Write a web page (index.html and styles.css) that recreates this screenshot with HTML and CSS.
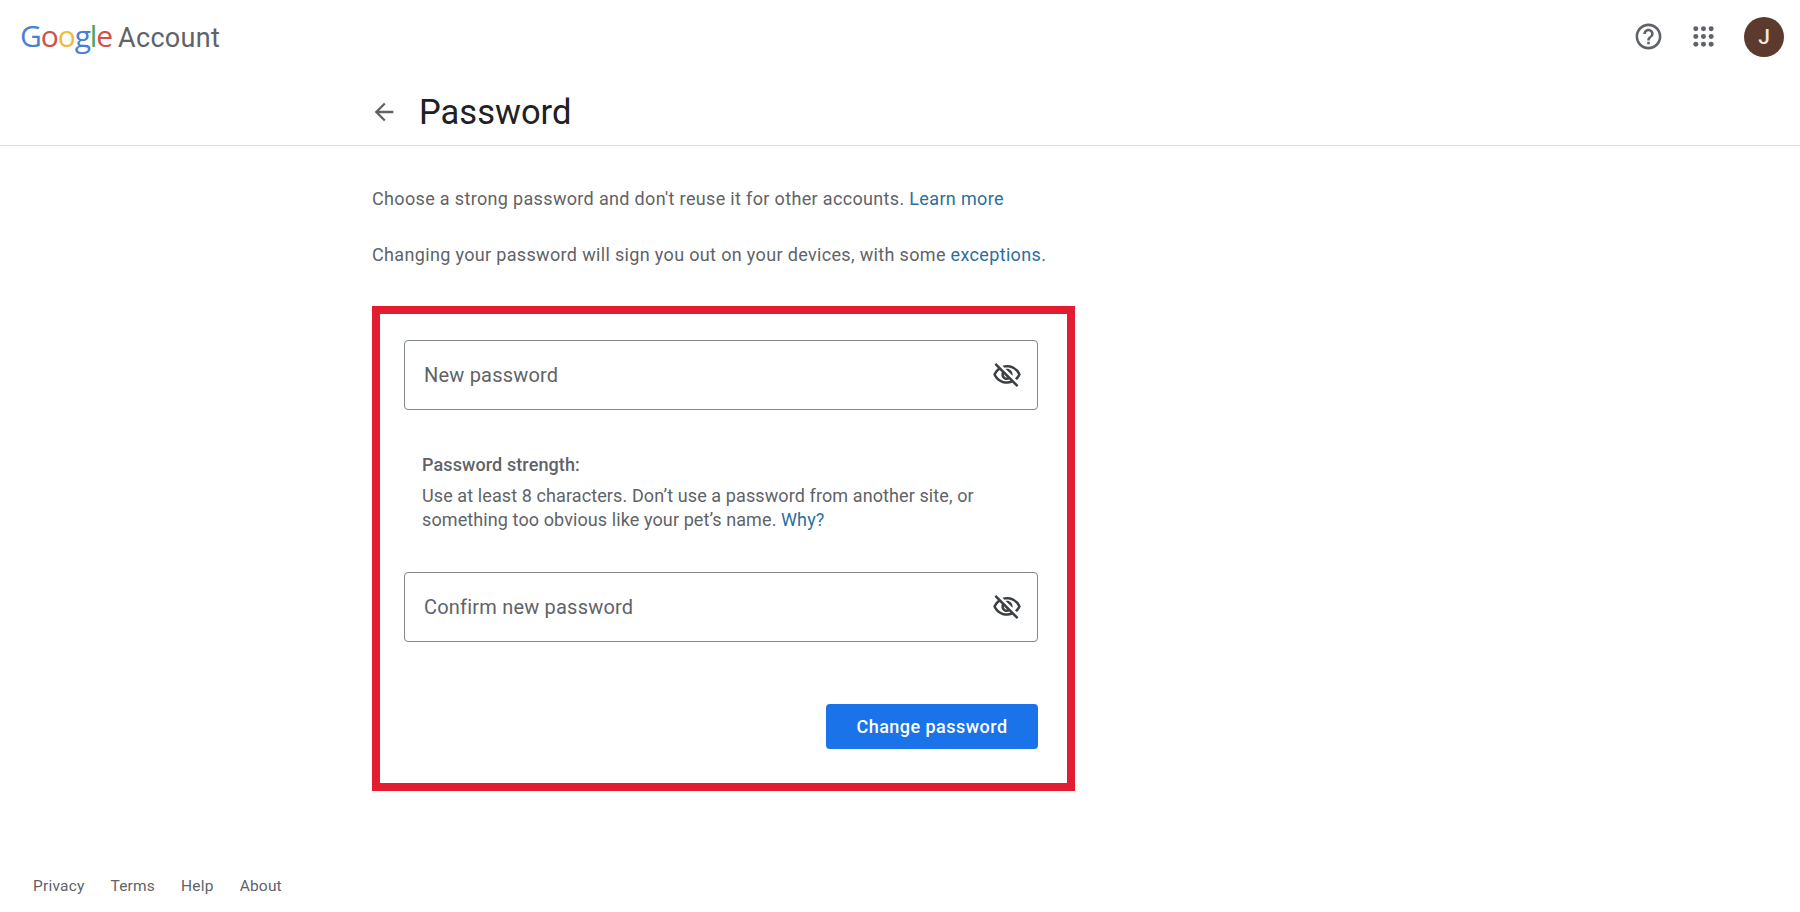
FILE: index.html
```html
<!DOCTYPE html>
<html lang="en">
<head>
    <meta charset="UTF-8">
    <meta name="viewport" content="width=device-width, initial-scale=1.0">
    <title>Password - Google Account</title>
    <link rel="stylesheet" href="styles.css">
</head>
<body>
    <!-- Top bar -->
    <header class="topbar">
        <a href="#" class="brand">
            <span class="brand-logo"><span class="g-blue">G</span><span class="g-red">o</span><span class="g-yellow">o</span><span class="g-blue">g</span><span class="g-green">l</span><span class="g-red">e</span></span>
            <span class="brand-name">Account</span>
        </a>
        <div class="topbar-actions">
            <svg class="icon-help" viewBox="0 0 24 24" fill="#5f6368"><path d="M11 18h2v-2h-2v2zm1-16C6.48 2 2 6.48 2 12s4.48 10 10 10 10-4.48 10-10S17.52 2 12 2zm0 18c-4.41 0-8-3.59-8-8s3.59-8 8-8 8 3.59 8 8-3.59 8-8 8zm0-14c-2.21 0-4 1.79-4 4h2c0-1.1.9-2 2-2s2 .9 2 2c0 2-3 1.75-3 5h2c0-2.25 3-2.5 3-5 0-2.21-1.79-4-4-4z"/></svg>
            <svg class="icon-apps" viewBox="0 0 24 24" fill="#5f6368"><circle cx="4" cy="4" r="2.6"/><circle cx="12" cy="4" r="2.6"/><circle cx="20" cy="4" r="2.6"/><circle cx="4" cy="12" r="2.6"/><circle cx="12" cy="12" r="2.6"/><circle cx="20" cy="12" r="2.6"/><circle cx="4" cy="20" r="2.6"/><circle cx="12" cy="20" r="2.6"/><circle cx="20" cy="20" r="2.6"/></svg>
            <div class="avatar">J</div>
        </div>
    </header>

    <!-- Page title -->
    <div class="title-bar">
        <svg class="icon-back" viewBox="0 0 24 24" fill="#5f6368"><path d="M20 11H7.83l5.59-5.59L12 4l-8 8 8 8 1.41-1.41L7.83 13H20v-2z"/></svg>
        <h1>Password</h1>
    </div>

    <!-- Form -->
    <main class="content">
        <p class="intro">Choose a strong password and don't reuse it for other accounts. <a href="#">Learn more</a></p>
        <p class="intro">Changing your password will sign you out on your devices, with some <a href="#">exceptions</a>.</p>

        <div class="form-box">
            <div class="field">
                <span>New password</span>
                <svg viewBox="0 0 24 24" fill="#3c4043"><path d="M12 6c3.79 0 7.17 2.13 8.82 5.5-.59 1.22-1.42 2.27-2.41 3.12l1.41 1.41c1.39-1.23 2.49-2.77 3.18-4.53C21.27 7.11 17 4 12 4c-1.27 0-2.49.2-3.64.57l1.65 1.65C10.66 6.09 11.32 6 12 6zm-1.07 1.14L13 9.21c.57.25 1.03.71 1.28 1.28l2.07 2.07c.08-.34.14-.7.14-1.07C16.5 9.01 14.48 7 12 7c-.37 0-.72.05-1.07.14zM2.01 3.87l2.68 2.68C3.06 7.83 1.77 9.53 1 11.5 2.73 15.89 7 19 12 19c1.52 0 2.98-.29 4.32-.82l3.42 3.42 1.41-1.41L3.42 2.45 2.01 3.87zm7.5 7.5l2.61 2.61c-.04.01-.08.02-.12.02-1.38 0-2.5-1.12-2.5-2.5 0-.05.01-.08.01-.13zm-3.4-3.4l1.75 1.75c-.23.55-.36 1.15-.36 1.78 0 2.48 2.02 4.5 4.5 4.5.63 0 1.23-.13 1.77-.36l.98.98c-.88.24-1.8.38-2.75.38-3.79 0-7.17-2.13-8.82-5.5.7-1.43 1.72-2.61 2.93-3.53z"/></svg>
            </div>

            <div class="strength">
                <h2>Password strength:</h2>
                <p>Use at least 8 characters. Don’t use a password from another site, or something too obvious like your pet’s name. <a href="#">Why?</a></p>
            </div>

            <div class="field">
                <span>Confirm new password</span>
                <svg viewBox="0 0 24 24" fill="#3c4043"><path d="M12 6c3.79 0 7.17 2.13 8.82 5.5-.59 1.22-1.42 2.27-2.41 3.12l1.41 1.41c1.39-1.23 2.49-2.77 3.18-4.53C21.27 7.11 17 4 12 4c-1.27 0-2.49.2-3.64.57l1.65 1.65C10.66 6.09 11.32 6 12 6zm-1.07 1.14L13 9.21c.57.25 1.03.71 1.28 1.28l2.07 2.07c.08-.34.14-.7.14-1.07C16.5 9.01 14.48 7 12 7c-.37 0-.72.05-1.07.14zM2.01 3.87l2.68 2.68C3.06 7.83 1.77 9.53 1 11.5 2.73 15.89 7 19 12 19c1.52 0 2.98-.29 4.32-.82l3.42 3.42 1.41-1.41L3.42 2.45 2.01 3.87zm7.5 7.5l2.61 2.61c-.04.01-.08.02-.12.02-1.38 0-2.5-1.12-2.5-2.5 0-.05.01-.08.01-.13zm-3.4-3.4l1.75 1.75c-.23.55-.36 1.15-.36 1.78 0 2.48 2.02 4.5 4.5 4.5.63 0 1.23-.13 1.77-.36l.98.98c-.88.24-1.8.38-2.75.38-3.79 0-7.17-2.13-8.82-5.5.7-1.43 1.72-2.61 2.93-3.53z"/></svg>
            </div>

            <div class="form-actions">
                <button>Change password</button>
            </div>
        </div>
    </main>

    <!-- Footer -->
    <footer class="footer">
        <a href="#">Privacy</a>
        <a href="#">Terms</a>
        <a href="#">Help</a>
        <a href="#">About</a>
    </footer>
</body>
</html>
```

FILE: styles.css
```css
/* General Styles */
* {
    margin: 0;
    padding: 0;
    box-sizing: border-box;
    font-family: Roboto, "Liberation Sans", sans-serif;
}

body {
    background-color: #fff;
    min-height: 912px;
    display: flex;
    flex-direction: column;
    color: #5f6368;
}

a {
    text-decoration: none;
    color: #2a6f9e;
}

/* Top bar */
.topbar {
    display: flex;
    justify-content: space-between;
    align-items: center;
    height: 73px;
    padding: 0 16px 0 20px;
}

.brand {
    display: flex;
    align-items: baseline;
    gap: 6px;
    margin-top: -3px;
}

.brand-logo {
    font-family: "Open Sans", sans-serif;
    font-size: 30px;
    font-weight: 500;
    letter-spacing: -1.1px;
}

.brand-logo span {
    font-family: inherit;
}

.g-blue { color: #4a7fd4; }
.g-red { color: #d1504a; }
.g-yellow { color: #eebc3a; }
.g-green { color: #4ba35f; }

.brand-name {
    font-size: 27px;
    letter-spacing: 0.3px;
    color: #5f6368;
}

.topbar-actions {
    display: flex;
    align-items: center;
}

.icon-help {
    width: 31px;
    height: 31px;
    margin-right: 28px;
}

.icon-apps {
    width: 23px;
    height: 23px;
    margin-right: 29px;
}

.avatar {
    width: 40px;
    height: 40px;
    border-radius: 50%;
    background-color: #5d3a2e;
    color: #f3e6dc;
    font-size: 21px;
    font-weight: 500;
    display: flex;
    justify-content: center;
    align-items: center;
}

/* Page title */
.title-bar {
    display: flex;
    align-items: center;
    height: 73px;
    padding: 5px 0 0 370px;
    border-bottom: 1px solid #dadce0;
}

.icon-back {
    width: 28px;
    height: 28px;
    margin-right: 21px;
}

.title-bar h1 {
    font-size: 34.5px;
    font-weight: 400;
    color: #202124;
}

/* Form */
.content {
    padding-left: 372px;
    flex: 1;
}

.intro {
    font-size: 18px;
    line-height: 24px;
    letter-spacing: 0.34px;
    margin-top: 41px;
}

.intro + .intro {
    margin-top: 32px;
}

.form-box {
    width: 703px;
    height: 485px;
    margin-top: 39px;
    padding: 26px 29px 0 24px;
    border: 8px solid #e31c32;
}

.field {
    display: flex;
    justify-content: space-between;
    align-items: center;
    height: 70px;
    padding: 0 15px 0 19px;
    border: 1px solid #80868b;
    border-radius: 4px;
    font-size: 20px;
    letter-spacing: 0.2px;
}

.field svg {
    width: 30px;
    height: 30px;
}

.strength {
    height: 162px;
    padding: 43px 30px 0 18px;
    font-size: 18px;
    letter-spacing: 0.1px;
    line-height: 24px;
}

.strength h2 {
    font-size: 18px;
    font-weight: 500;
    margin-bottom: 7px;
}

.form-actions {
    display: flex;
    justify-content: flex-end;
    margin-top: 62px;
}

.form-actions button {
    width: 212px;
    height: 45px;
    border: none;
    border-radius: 4px;
    background-color: #1a73e8;
    color: #fff;
    font-size: 18px;
    font-weight: 500;
    letter-spacing: 0.47px;
}

/* Footer */
.footer {
    display: flex;
    gap: 26px;
    padding: 0 0 17px 33px;
}

.footer a {
    font-size: 15.5px;
    line-height: 18px;
    color: #5f6368;
    letter-spacing: 0.2px;
}
```
